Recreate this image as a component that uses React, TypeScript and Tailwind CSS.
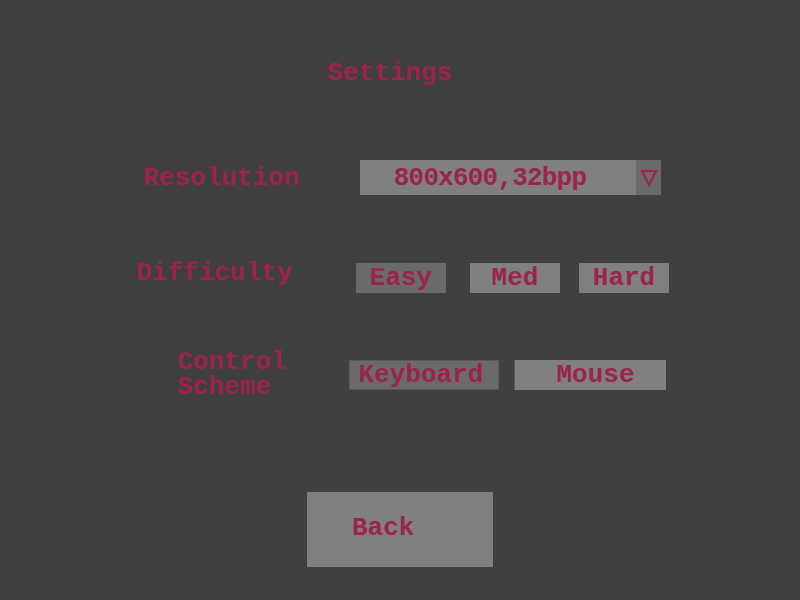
export default function App() {
  return (
    <div className="w-[800px] h-[600px] bg-[#404040] flex flex-col font-['Liberation_Mono',monospace] font-bold text-[26px] leading-[26px] text-[#9b234f]">
      {/* title */}
      <div className="mt-[60px] pl-[327px] h-[26px]">Settings</div>

      {/* resolution */}
      <div className="mt-[74px] pl-[143px] flex items-center h-[35px]">
        <div className="w-[217px]">Resolution</div>
        <div className="w-[301px] h-[35px] bg-[#808080] flex">
          <div className="flex-1 flex items-center justify-center pr-[16px] tracking-[-0.8px]">800x600,32bpp</div>
          <div className="w-[25px] h-full bg-[#6a6a6a] flex items-center justify-center">
            <svg width="18" height="18" viewBox="0 0 18 18">
              <polygon points="2,2 16,2 9,16" fill="none" stroke="#9b234f" strokeWidth="2" />
            </svg>
          </div>
        </div>
      </div>

      {/* difficulty */}
      <div className="mt-[68px] pl-[136px] flex items-center h-[30px]">
        <div className="w-[220px] -mt-[10px]">Difficulty</div>
        <div className="w-[90px] h-[30px] bg-[#6a6a6a] flex items-center justify-center">Easy</div>
        <div className="ml-[24px] w-[90px] h-[30px] bg-[#808080] flex items-center justify-center">Med</div>
        <div className="ml-[19px] w-[90px] h-[30px] bg-[#808080] flex items-center justify-center">Hard</div>
      </div>

      {/* control scheme */}
      <div className="mt-[67px] pl-[177px] flex items-center h-[30px]">
        <div className="w-[172px] leading-[25px]">
          Control
          <br />
          Scheme
        </div>
        <div className="w-[150px] h-[30px] bg-[#6a6a6a] border border-[#5a5a5a] flex items-center justify-center pr-[6px]">Keyboard</div>
        <div className="ml-[15px] w-[152px] h-[30px] bg-[#808080] border-l border-[#5a5a5a] flex items-center justify-center pl-[10px]">Mouse</div>
      </div>

      {/* back */}
      <div className="mt-[102px] pl-[307px]">
        <button className="w-[186px] h-[75px] bg-[#808080] flex items-center pl-[45px] pb-[3px] font-bold text-[#9b234f]">Back</button>
      </div>
    </div>
  );
}
